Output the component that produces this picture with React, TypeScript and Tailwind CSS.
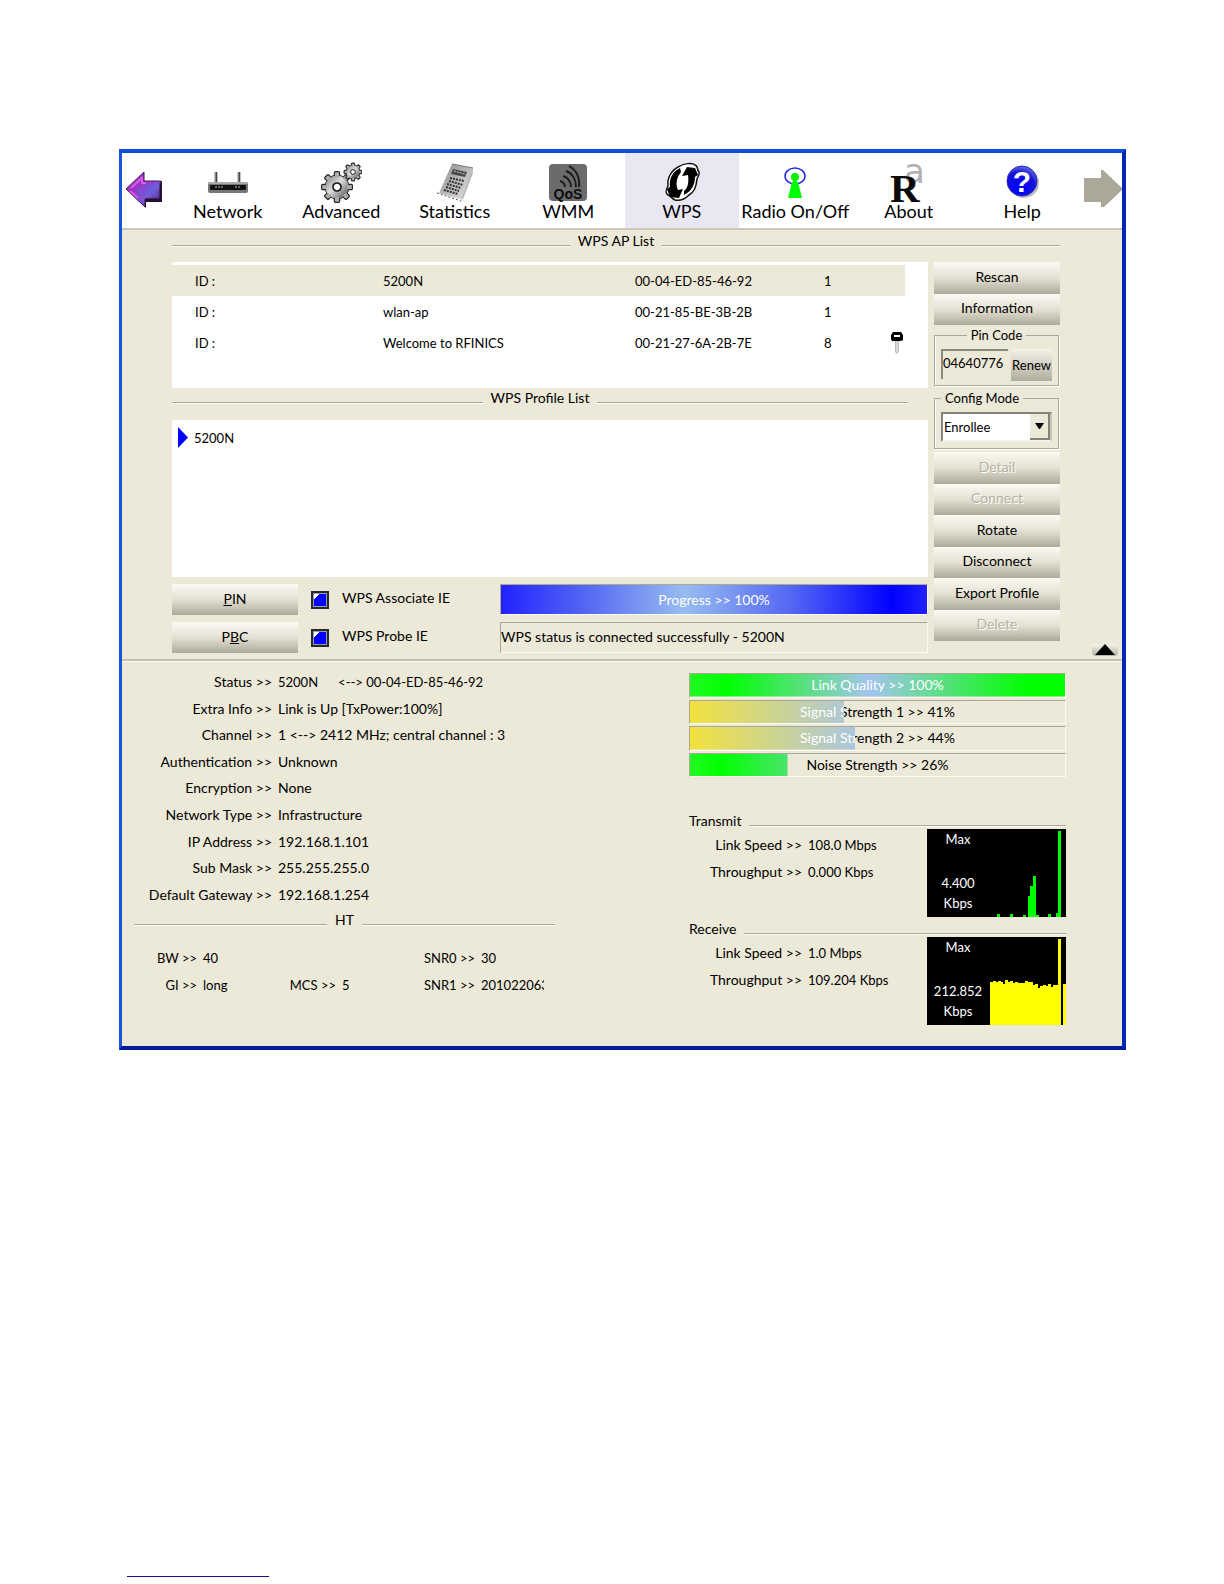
import type { ReactNode } from 'react'

const apList = [
  { id: 'ID :', ssid: '5200N', mac: '00-04-ED-85-46-92', channel: 1, locked: false, selected: true },
  { id: 'ID :', ssid: 'wlan-ap', mac: '00-21-85-BE-3B-2B', channel: 1, locked: false, selected: false },
  { id: 'ID :', ssid: 'Welcome to RFINICS', mac: '00-21-27-6A-2B-7E', channel: 8, locked: true, selected: false },
]

const statusRows = [
  ['Extra Info', 'Link is Up [TxPower:100%]'],
  ['Channel', '1 <--> 2412 MHz; central channel : 3'],
  ['Authentication', 'Unknown'],
  ['Encryption', 'None'],
  ['Network Type', 'Infrastructure'],
  ['IP Address', '192.168.1.101'],
  ['Sub Mask', '255.255.255.0'],
  ['Default Gateway', '192.168.1.254'],
]

// [x, height] in graph pixels
const txBars = [
  [70, 3], [83, 3], [96, 2], [101, 21], [103, 31], [106, 41], [109, 2], [121, 3], [129, 4], [131, 86],
]
const rxBars = [
  [63, 43], [66, 44], [68, 43], [71, 44], [73, 43], [76, 41], [78, 45], [81, 43], [83, 44], [86, 42],
  [88, 43], [91, 42], [93, 42], [96, 42], [98, 44], [101, 43], [103, 43], [106, 40], [108, 41], [111, 37],
  [113, 39], [116, 40], [118, 39], [121, 41], [123, 38], [126, 40], [128, 40], [131, 86], [136, 41],
]

function PrevArrow() {
  return (
    <svg width="36" height="38" viewBox="0 0 36 38">
      <defs>
        <linearGradient id="prev" x1="0" y1="0" x2="1" y2="1">
          <stop offset="0" stopColor="#c04ad0" />
          <stop offset="0.35" stopColor="#a02fc4" />
          <stop offset="0.65" stopColor="#7a5ad8" />
          <stop offset="1" stopColor="#3a1260" />
        </linearGradient>
      </defs>
      <path d="M2 19 18 2v8h18v21H20v6z" fill="#1b0b26" />
      <path d="M0 18 18 1v9h17v18H19v8z" fill="url(#prev)" stroke="#3c1650" strokeWidth="1" />
      <path d="M5 17 16 7v5h4M4 20l8 7" fill="none" stroke="#d85ae8" strokeWidth="2" />
      <path d="m19 14 4 5-3 5m8-11-2 8 5 3M13 17l2 6" fill="none" stroke="#5a62e0" strokeWidth="2" />
      <path d="M20 29h15V12" fill="none" stroke="#2a1038" strokeWidth="3" />
    </svg>
  )
}

function NextArrow() {
  return (
    <svg width="38" height="38" viewBox="0 0 38 38">
      <path d="M0 8h17V0h2l19 18v2L20 37h-3v-5H0z" fill="#aca899" />
    </svg>
  )
}

function RouterIcon() {
  return (
    <svg width="42" height="42" viewBox="0 0 42 42">
      <path d="M9 11v12M32 11v12" stroke="#888" strokeWidth="3" />
      <path d="M9.500 11v12M32.500 11v12" stroke="#444" strokeWidth="1" />
      <rect x="1" y="21" width="40" height="11" rx="2" fill="#777" />
      <rect x="1" y="21" width="40" height="2" fill="#aaa" />
      <rect x="3" y="24" width="36" height="5" rx="1" fill="#111" />
      <path d="M8 26h8M28 26h5" stroke="#bbb" strokeWidth="1" strokeDasharray="2 1" />
    </svg>
  )
}

function Gear({ cx, cy, r, id }: { cx: number; cy: number; r: number; id: string }) {
  const teeth = [0, 45, 90, 135, 180, 225, 270, 315]
  return (
    <g transform={`translate(${cx} ${cy})`}>
      <defs>
        <linearGradient id={id} x1="0" y1="0" x2="1" y2="1">
          <stop offset="0" stopColor="#777" />
          <stop offset="0.45" stopColor="#ddd" />
          <stop offset="0.7" stopColor="#999" />
          <stop offset="1" stopColor="#333" />
        </linearGradient>
      </defs>
      {teeth.map((a) => (
        <rect
          key={a}
          x={-r * 0.22}
          y={-r * 1.28}
          width={r * 0.44}
          height={r * 0.6}
          rx="1"
          fill="#bbb"
          stroke="#222"
          strokeWidth="1.200"
          transform={`rotate(${a})`}
        />
      ))}
      <circle r={r} fill={`url(#${id})`} stroke="#333" strokeWidth="1" />
      {teeth.map((a) => (
        <rect key={a} x={-r * 0.17} y={-r * 1.15} width={r * 0.34} height={r * 0.3} fill="#aaa" transform={`rotate(${a})`} />
      ))}
      <circle r={r * 0.34} fill="#fff" stroke="#111" strokeWidth={r * 0.13} />
    </g>
  )
}

function GearsIcon() {
  return (
    <svg width="42" height="42" viewBox="0 0 42 42">
      <Gear cx={17} cy={26} r={12} id="gear-a" />
      <Gear cx={33} cy={11} r={7} id="gear-b" />
    </svg>
  )
}

function CalculatorIcon() {
  return (
    <svg width="42" height="42" viewBox="0 0 42 42">
      <defs>
        <linearGradient id="calc" x1="0" y1="0" x2="1" y2="1">
          <stop offset="0" stopColor="#8a8a8a" />
          <stop offset="1" stopColor="#e8e8e8" />
        </linearGradient>
      </defs>
      <path d="m18 3 21 4v5L29 39 5 32z" fill="url(#calc)" />
      <path d="m18 3 21 4" stroke="#777" strokeWidth="1" />
      <path d="m19 8 14 3-2 5-14-3z" fill="#4a4a4a" />
      <path d="m20 10 11 3" stroke="#ccc" strokeWidth="1" strokeDasharray="2 1" />
      <path d="m16 17 14 3m-15 0 14 4m-16-1 14 4m-15-1 13 4m-15-1 14 4" stroke="#333" strokeWidth="2" strokeDasharray="2 1" />
      <path d="m3 32 24 8" stroke="#555" strokeWidth="1" strokeDasharray="2 2" />
      <path d="m38 12-10 26" stroke="#aaa" strokeWidth="1" />
    </svg>
  )
}

function QosIcon() {
  return (
    <svg width="42" height="42" viewBox="0 0 42 42">
      <rect x="2" y="3" width="38" height="37" rx="4" fill="#6b6b6b" />
      <path d="M13 20a7 7 0 0 1 5 6M16 15c5 1 8 6 8 11M19 10c6 2 10 8 10 16M22 5c7 4 11 11 10 21" fill="none" stroke="#1c1c1c" strokeWidth="2" />
      <text x="21" y="38" textAnchor="middle" fontFamily="Liberation Sans, sans-serif" fontWeight="700" fontSize="14" fill="#0c0c0c">
        QoS
      </text>
    </svg>
  )
}

function WpsIcon() {
  return (
    <svg width="42" height="42" viewBox="0 0 42 42">
      <path
        d="M19 5C22 3 31 1 34 4c4 2 1 3 4 7 1 3-1 4-2 7-1 9-3 13-8 16-4 4-9 6-14 5-4-2-4-4-7-5-4-3-1-6 0-9C6 17 10 9 19 5z"
        fill="#fff"
        stroke="#111"
        strokeWidth="1.500"
      />
      <path d="M19 7c-8 4-11 11-10 19l-3 2 3 8 9 1 4-9-5 1c-3-6-1-13 3-18z" fill="#000" />
      <path d="M23 34c8-4 11-11 11-18l3-2-3-7-8-1-5 9 6-1c1 7 0 13-4 16z" fill="#000" />
    </svg>
  )
}

function RadioIcon() {
  return (
    <svg width="42" height="42" viewBox="0 0 42 42">
      <ellipse cx="21" cy="15" rx="10" ry="8" fill="none" stroke="#2a2ae0" strokeWidth="1.500" />
      <circle cx="21" cy="16" r="4" fill="#00f000" />
      <path d="M18 21h6l4 16H14z" fill="#00ff00" />
      <path d="M19 19h4v4h-4z" fill="#00ff00" />
    </svg>
  )
}

function AboutIcon() {
  return (
    <svg className="overflow-visible" width="42" height="42" viewBox="0 0 42 42">
      <text x="16" y="22" fontFamily="DejaVu Sans, sans-serif" fontSize="34" fill="#b0b0b0">
        a
      </text>
      <text x="2" y="41" fontFamily="Liberation Serif, serif" fontWeight="700" fontSize="41" fill="#0a0a0a">
        R
      </text>
    </svg>
  )
}

function HelpIcon() {
  return (
    <svg width="42" height="42" viewBox="0 0 42 42">
      <defs>
        <radialGradient id="help" cx="0.4" cy="0.75" r="0.9">
          <stop offset="0" stopColor="#0000ff" />
          <stop offset="0.6" stopColor="#1414d8" />
          <stop offset="1" stopColor="#9fa4ec" />
        </radialGradient>
      </defs>
      <circle cx="23" cy="22" r="15" fill="#b9b9c2" />
      <circle cx="21" cy="20" r="15" fill="url(#help)" stroke="#2a2ab0" strokeWidth="1" />
      <text x="21" y="31" textAnchor="middle" fontFamily="Liberation Sans, sans-serif" fontWeight="700" fontSize="30" fill="#fff">
        ?
      </text>
    </svg>
  )
}

function KeyIcon() {
  return (
    <svg width="14" height="24" viewBox="0 0 14 24">
      <path d="M5 9h4v11l-2 3-2-2z" fill="#bdbdbd" />
      <path d="M7 10v11" stroke="#f4f4f4" strokeWidth="1" />
      <path d="M3 1h8l2 3v5l-2 1H2L1 8V4z" fill="#000" />
      <rect x="4" y="4" width="6" height="2" fill="#fff" />
    </svg>
  )
}

const tabs = [
  { label: 'Network', icon: <RouterIcon /> },
  { label: 'Advanced', icon: <GearsIcon /> },
  { label: 'Statistics', icon: <CalculatorIcon /> },
  { label: 'WMM', icon: <QosIcon /> },
  { label: 'WPS', icon: <WpsIcon />, active: true },
  { label: 'Radio On/Off', icon: <RadioIcon /> },
  { label: 'About', icon: <AboutIcon /> },
  { label: 'Help', icon: <HelpIcon /> },
]

function Toolbar() {
  return (
    <nav className="flex h-[77px] border-b-2 border-[#c9c6ba] bg-white">
      <button aria-label="Previous" className="flex w-[49px] shrink-0 items-start pt-[18px] pl-1">
        <PrevArrow />
      </button>
      <div className="grid min-w-0 flex-1 grid-cols-8">
        {tabs.map((tab) => (
          <button
            key={tab.label}
            className={`flex flex-col items-center pt-2 ${tab.active ? 'bg-[#e9e7f1]' : ''}`}
          >
            {tab.icon}
            <span className="text-[18px] leading-4 whitespace-nowrap">{tab.label}</span>
          </button>
        ))}
      </div>
      <button aria-label="Next" className="flex w-[43px] shrink-0 items-start justify-end pt-[17px]">
        <NextArrow />
      </button>
    </nav>
  )
}

function Line() {
  return <span className="mb-[2px] h-[2px] flex-1 border-t border-b border-t-[#aca899] border-b-[#fbfaf4]" />
}

function Divider({ children, className }: { children: ReactNode; className?: string }) {
  return (
    <div className={`flex items-end gap-2 text-[14px] leading-4 ${className ?? ''}`}>
      <Line />
      <h2>{children}</h2>
      <Line />
    </div>
  )
}

function PanelButton({ children, disabled }: { children: ReactNode; disabled?: boolean }) {
  return (
    <button
      disabled={disabled}
      className="h-full w-full bg-linear-to-b from-[#fbfaf3] via-[#e4e1d3] via-50% to-[#aeaa9b] pb-[2px] text-[14px] leading-4 disabled:text-[#b5b2a4] disabled:[text-shadow:1px_1px_0_#fff]"
    >
      {children}
    </button>
  )
}

function Meter({ label, value, fill }: { label: string; value: number; fill: string }) {
  const text = `${label} >> ${value}%`
  return (
    <div
      role="progressbar"
      aria-label={label}
      aria-valuenow={value}
      className="relative flex items-center justify-center border border-t-[#aca899] border-r-[#fbfaf4] border-b-[#fbfaf4] border-l-[#aca899] text-[14px]"
    >
      {text}
      <div
        aria-hidden="true"
        className={`absolute inset-0 flex items-center justify-center text-white ${fill}`}
        style={{ clipPath: `inset(0 ${100 - value}% 0 0)` }}
      >
        {text}
      </div>
    </div>
  )
}

function IeCheckbox({ id, label }: { id: string; label: string }) {
  return (
    <div className="flex items-center gap-[13px]">
      <input
        id={id}
        type="checkbox"
        defaultChecked
        className="h-[18px] w-[18px] appearance-none border-2 border-[#26262e] bg-[#2020a0] shadow-[inset_0_0_0_1px_#9a9aa8] checked:bg-[linear-gradient(135deg,#fff_0,#fff_27%,#0000ff_27%)]"
      />
      <label htmlFor={id} className="pb-1 text-[14px] leading-4">
        {label}
      </label>
    </div>
  )
}

function Fieldset({ legend, className, children }: { legend: string; className?: string; children: ReactNode }) {
  return (
    <fieldset className="mr-px h-[59px] border border-[#aca899] px-[6px] shadow-[inset_1px_0_0_#fff,1px_1px_0_#fff]">
      <legend className={`px-1 leading-4 ${className ?? ''}`}>{legend}</legend>
      {children}
    </fieldset>
  )
}

function SideControls() {
  return (
    <div className="flex w-[126px] shrink-0 flex-col">
      <div className="grid h-[63px] grid-rows-2">
        <PanelButton>Rescan</PanelButton>
        <PanelButton>Information</PanelButton>
      </div>
      <div className="mt-[2px] flex flex-col gap-1">
        <Fieldset legend="Pin Code" className="mx-auto">
          <div className="mt-[6px] flex gap-[3px]">
            <input
              aria-label="Pin Code"
              defaultValue="04640776"
              className="h-[30px] w-[67px] min-w-0 border-t-2 border-l-2 border-[#8d8a7c] pb-1 outline-none"
            />
            <button className="h-8 flex-1 bg-linear-to-b from-[#f4f2e8] to-[#b1ad9e] text-[13px]">Renew</button>
          </div>
        </Fieldset>
        <Fieldset legend="Config Mode">
          <div className="relative mt-[6px] border-2 border-[#85827a] border-r-[#c9c6b8] border-b-[#f5f4ec]">
            <select
              aria-label="Config Mode"
              className="block h-[26px] w-full appearance-none bg-white pr-6 pl-px outline-none"
            >
              <option>Enrollee</option>
            </select>
            <span className="pointer-events-none absolute top-0 right-0 bottom-0 flex w-5 items-center justify-center border-r-2 border-b-2 border-[#85827a] bg-[#ece9d8]">
              <svg width="9" height="6" viewBox="0 0 9 6">
                <path d="M0 0h9L5 6H4z" fill="#000" />
              </svg>
            </span>
          </div>
        </Fieldset>
      </div>
      <div className="mt-[3px] grid h-[189px] grid-rows-6">
        <PanelButton disabled>Detail</PanelButton>
        <PanelButton disabled>Connect</PanelButton>
        <PanelButton>Rotate</PanelButton>
        <PanelButton>Disconnect</PanelButton>
        <PanelButton>Export Profile</PanelButton>
        <PanelButton disabled>Delete</PanelButton>
      </div>
    </div>
  )
}

function ApTable() {
  return (
    <div className="h-[126px] bg-white pt-[3px] pr-[23px]">
      <table className="w-full table-fixed border-collapse text-left">
        <colgroup>
          <col className="w-[211px]" />
          <col className="w-[252px]" />
          <col className="w-[189px]" />
          <col className="w-[66px]" />
          <col />
        </colgroup>
        <tbody>
          {apList.map((ap) => (
            <tr key={ap.mac} className={`h-[31px] whitespace-nowrap ${ap.selected ? 'bg-[#ece9d8]' : ''}`}>
              <td className="pl-[23px]">{ap.id}</td>
              <td>{ap.ssid}</td>
              <td>{ap.mac}</td>
              <td>{ap.channel}</td>
              <td>
                {ap.locked && <KeyIcon />}
              </td>
            </tr>
          ))}
        </tbody>
      </table>
    </div>
  )
}

function WpsPanel() {
  return (
    <section className="border-b-2 border-[#c4c1b2] pr-[62px] pl-[50px]">
      <Divider className="h-[19px]">WPS AP List</Divider>
      <div className="mt-[13px] flex gap-[6px] pb-[6px]">
        <div className="min-w-0 flex-1">
          <ApTable />
          <Divider className="h-[18px] pr-5">WPS Profile List</Divider>
          <ul className="mt-[14px] h-[157px] bg-white pt-[7px] pl-[6px]">
            <li className="flex items-center gap-[6px]">
              <svg width="10" height="21" viewBox="0 0 10 21">
                <path d="M0 0l10 10.500L0 21z" fill="#0000ff" />
              </svg>
              5200N
            </li>
          </ul>
          <div className="mt-[7px] flex">
            <div className="grid w-[126px] grid-rows-[31px_31px] gap-[7px]">
              <PanelButton>
                <u>P</u>IN
              </PanelButton>
              <PanelButton>
                P<u>B</u>C
              </PanelButton>
            </div>
            <div className="ml-[13px] grid w-[189px] grid-rows-[31px_31px] gap-[7px]">
              <IeCheckbox id="associate" label="WPS Associate IE" />
              <IeCheckbox id="probe" label="WPS Probe IE" />
            </div>
            <div className="grid flex-1 grid-rows-[31px_31px] gap-[7px]">
              <Meter
                label="Progress"
                value={100}
                fill="bg-linear-[90deg,#2222ff_0%,#5468f4_20%,#98bcf0_43%,#5468f4_68%,#0000ff_92%,#2222ff_100%]"
              />
              <p className="border border-t-[#aca899] border-r-[#fbfaf4] border-b-[#fbfaf4] border-l-[#aca899] text-[14px] leading-7 whitespace-nowrap">
                WPS status is connected successfully - 5200N
              </p>
            </div>
          </div>
        </div>
        <SideControls />
      </div>
    </section>
  )
}

function Pair({ label, value, width }: { label: string; value: ReactNode; width: string }) {
  return (
    <div className="flex items-center whitespace-nowrap">
      <dt className={`text-right ${width}`}>{label} &gt;&gt;</dt>
      <dd className="ml-[6px]">{value}</dd>
    </div>
  )
}

function Graph({ max, bars, fill }: { max: string; bars: number[][]; fill: string }) {
  return (
    <div className="relative h-[88px] w-[139px] shrink-0 bg-black text-center leading-5 text-white">
      <svg className="absolute inset-0" width="139" height="88" viewBox="0 0 139 88" shapeRendering="crispEdges">
        {bars.map(([x, h]) => (
          <rect key={x} x={x} y={88 - h} width="3" height={h} fill={fill} />
        ))}
      </svg>
      <div className="flex w-[62px] flex-col">
        <span>Max</span>
        <span className="mt-6">{max}</span>
        <span>Kbps</span>
      </div>
    </div>
  )
}

function Traffic({ title, speed, throughput, children }: { title: string; speed: string; throughput: string; children: ReactNode }) {
  return (
    <div className="flex h-[108px] flex-col">
      <div className="flex items-end gap-2 text-[14px] leading-4">
        <h2>{title}</h2>
        <Line />
      </div>
      <div className="flex justify-between">
        <dl className="grid h-[56px] grid-rows-2 pt-[3px]">
          <Pair label="Link Speed" value={<span className="text-[13px]">{speed}</span>} width="w-[113px] text-[14px]" />
          <Pair label="Throughput" value={<span className="text-[13px]">{throughput}</span>} width="w-[113px] text-[14px]" />
        </dl>
        {children}
      </div>
    </div>
  )
}

function StatusPanel() {
  return (
    <section className="flex min-h-[385px] justify-between gap-4 border-t border-[#fdfcf7] pr-14 pl-3">
      <div className="w-[421px] pt-[7px]">
        <dl className="grid h-[239px] grid-rows-9 text-[14px]">
          <Pair
            label="Status"
            width="w-[138px]"
            value={
              <span className="flex gap-5 text-[13px]">
                <span>5200N</span>
                <span>&lt;--&gt; 00-04-ED-85-46-92</span>
              </span>
            }
          />
          {statusRows.map(([label, value]) => (
            <Pair key={label} label={label} value={value} width="w-[138px]" />
          ))}
        </dl>
        <Divider className="mt-1">HT</Divider>
        <dl className="mt-[17px] grid h-[53px] grid-cols-[133px_133px_1fr] grid-rows-2">
          <Pair label="BW" value="40" width="w-[63px]" />
          <div />
          <Pair label="SNR0" value="30" width="w-[75px]" />
          <Pair label="GI" value="long" width="w-[63px]" />
          <Pair label="MCS" value="5" width="w-[69px]" />
          <Pair label="SNR1" width="w-[75px]" value={<span className="block w-[63px] overflow-hidden">201022063</span>} />
        </dl>
      </div>
      <div className="w-[377px] pt-[11px]">
        <div className="grid h-[104px] grid-rows-4 gap-[2px]">
          <Meter
            label="Link Quality"
            value={100}
            fill="bg-linear-[90deg,#22fa22_0%,#00ff00_10%,#a4c4ee_48%,#00ff00_90%]"
          />
          <Meter label="Signal Strength 1" value={41} fill="bg-linear-[90deg,#f2e23c_0%,#a4c4ee_48%]" />
          <Meter label="Signal Strength 2" value={44} fill="bg-linear-[90deg,#f2e23c_0%,#a4c4ee_48%]" />
          <Meter label="Noise Strength" value={26} fill="bg-linear-[90deg,#22fa22_0%,#00ff00_8%,#a4c4ee_48%]" />
        </div>
        <div className="mt-9">
          <Traffic title="Transmit" speed="108.0 Mbps" throughput="0.000 Kbps">
            <Graph max="4.400" bars={txBars} fill="#00ff00" />
          </Traffic>
          <Traffic title="Receive" speed="1.0 Mbps" throughput="109.204 Kbps">
            <Graph max="212.852" bars={rxBars} fill="#ffff00" />
          </Traffic>
        </div>
      </div>
    </section>
  )
}

export default function App() {
  return (
    <div className="bg-white pt-[149px] pr-[98px] pl-[119px] font-[Lato,sans-serif] text-[13px] leading-4 text-black">
      <main className="relative border-t-[4px] border-r-[4px] border-b-[4px] border-l-[3px] border-t-[#0c4fd8] border-r-[#0526b4] border-b-[#001c98] border-l-[#1557da] bg-[#ece9d8]">
        <Toolbar />
        <WpsPanel />
        <button
          aria-label="Collapse"
          className="absolute top-[491px] right-1 flex h-3 w-[26px] justify-center rounded-sm bg-linear-to-b from-[#f6f4ea] to-[#b5b1a2]"
        >
          <svg width="20" height="11" viewBox="0 0 20 11">
            <path d="M10 0l10 11H0z" fill="#000" />
          </svg>
        </button>
        <StatusPanel />
      </main>
      <footer className="pt-[510px] pl-2">
        <a href="#page" aria-label="Page link" className="block h-[17px] w-[142px] border-b border-[#1a0f8c]" />
      </footer>
    </div>
  )
}
